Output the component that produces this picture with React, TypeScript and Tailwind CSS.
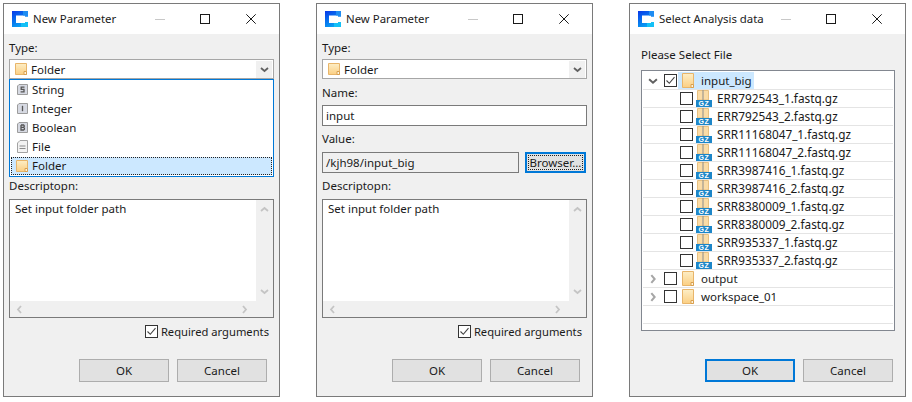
import React from 'react';

const font = "font-['Noto_Sans','Liberation_Sans',sans-serif]";

const Logo = () => (
  <svg width="16" height="16" viewBox="0 0 16 16" className="shrink-0">
    <defs>
      <linearGradient id="lg" x1="0" y1="0" x2="0.6" y2="1">
        <stop offset="0" stopColor="#0838e8" />
        <stop offset="1" stopColor="#08a8f4" />
      </linearGradient>
    </defs>
    <path d="M0 0H16V5.5H13V4.5H4V12H13V11H16V16H0Z" fill="url(#lg)" />
    <path d="M11 0H16V5.5H13V4.5H11Z" fill="#1e8cf2" />
    <path d="M9 12H13V11H16V16H9Z" fill="#14c0f6" />
  </svg>
);

const FolderIcon = ({ tall }: { tall?: boolean }) => (
  <svg width="12" height={tall ? 15 : 12} viewBox={tall ? '0 0 12 15' : '0 0 12 12'} className="shrink-0">
    <defs>
      <linearGradient id="fg" x1="0" y1="0" x2="0" y2="1">
        <stop offset="0" stopColor="#fdeec6" />
        <stop offset="1" stopColor="#fbcf83" />
      </linearGradient>
    </defs>
    <path d={tall ? 'M.5.5H11.5V14.5H.5Z' : 'M.5.5H11.5V11.5H.5Z'} fill="url(#fg)" stroke="#e8b56a" />
    <path d={tall ? 'M9 11.5H11.5V14.5H9Z' : 'M9 8.5H11.5V11.5H9Z'} fill="#fff4dc" stroke="#d9a050" />
  </svg>
);

const TypeIcon = ({ letter }: { letter: string }) => (
  <svg width="11" height="11" viewBox="0 0 11 11" className="shrink-0">
    <path d="M2 .5H10.5V10.5H.5V2Z" fill="#d6d9e2" stroke="#9c9c9c" />
    <path
      d={
        letter === 'S'
          ? 'M7.5 3.2H4.2V5.4H7V7.8H3.6'
          : letter === 'I'
            ? 'M5.5 2.8V8.2'
            : 'M4 3H6.6L7.2 3.7V4.7L6.6 5.3H4M6.6 5.3L7.4 6V7.3L6.6 8H4V3'
      }
      fill="none"
      stroke="#555"
      strokeWidth="1.3"
    />
  </svg>
);

const FileIcon = () => (
  <svg width="11" height="13" viewBox="0 0 11 13" className="shrink-0">
    <path d="M3 .5H10.5V12.5H.5V3Z" fill="#f2f2f2" stroke="#a3a3a3" />
    <path d="M2.5 6H8.5M2.5 8.5H8.5" stroke="#8a8a8a" />
  </svg>
);

const GzIcon = () => (
  <svg width="16" height="17" viewBox="0 0 16 17" className="shrink-0">
    <path d="M1.5.5H12.5V10H1.5Z" fill="#fbdca6" stroke="#e8c080" />
    <path d="M6 1H8M6 3H8M6 5H8M6 7H8M6 9H8" stroke="#8d8d8d" />
    <rect x="0" y="10" width="16" height="7" fill="#1d86c8" />
    <text x="8" y="16" textAnchor="middle" fontSize="7" fontWeight="700" letterSpacing="0.6" fill="#fff" fontFamily="Liberation Sans">
      GZ
    </text>
  </svg>
);

const Chevron = ({ dir, color = '#c4c4c4', size = 9 }: { dir: 'up' | 'down' | 'left' | 'right'; color?: string; size?: number }) => {
  const d = {
    up: 'M1 6L4.5 3L8 6',
    down: 'M1 3L4.5 6L8 3',
    left: 'M6 1L3 4.5L6 8',
    right: 'M3 1L6 4.5L3 8',
  }[dir];
  return (
    <svg width={size} height={size} viewBox="0 0 9 9" className="shrink-0">
      <path d={d} fill="none" stroke={color} strokeWidth="1.8" />
    </svg>
  );
};

const Window = ({ title, children }: { title: string; children: React.ReactNode }) => (
  <div className="w-[277px] h-[394px] border border-[#7a7a7a] bg-[#f0f0f0] flex flex-col shrink-0">
    <div className="h-[30px] bg-white flex items-center pl-[8px] shrink-0">
      <Logo />
      <span className="ml-[5px] w-[122px] text-[11.4px] text-[#1a1a1a] truncate">{title}</span>
      <div className="w-[10px] h-px bg-[#c8c8c8] mt-px" />
      <div className="w-[10px] h-[10px] border border-[#1a1a1a] ml-[35px]" />
      <svg width="10" height="10" viewBox="0 0 10 10" className="ml-[36px]">
        <path d="M.3.3L9.7 9.7M9.7.3L.3 9.7" stroke="#1a1a1a" />
      </svg>
    </div>
    {children}
  </div>
);

const Check = ({ checked, className }: { checked?: boolean; className: string }) => (
  <div className={`w-[13px] h-[13px] border border-[#333] bg-white flex items-center justify-center shrink-0 ${className}`}>
    {checked && (
      <svg width="11" height="11" viewBox="0 0 11 11">
        <path d="M1.5 5.5L4.3 8.3L9.5 2.2" fill="none" stroke="#444" strokeWidth="1.1" />
      </svg>
    )}
  </div>
);

const TypeSelect = () => (
  <div className="h-[20px] mx-[5px] border border-[#a6a6a6] bg-white flex items-center pl-[5px] pr-[1px] shrink-0">
    <FolderIcon />
    <span className="ml-[4px] flex-1 pt-[2px]">Folder</span>
    <div className="w-[16px] h-[17px] bg-[#f0f0f0] flex items-center justify-center">
      <Chevron dir="down" color="#606060" />
    </div>
  </div>
);

const Description = () => (
  <>
    <div className="h-[16px] mx-[5px] leading-[16px] mt-[1px] shrink-0">Descriptopn:</div>
    <div className="h-[119px] mx-[5px] mt-[5px] border border-[#7a7a7a] bg-white flex flex-col shrink-0">
      <div className="flex-1 flex min-h-0">
        <div className="flex-1 pl-[5px] leading-[18px]">Set input folder path</div>
        <div className="w-[17px] bg-[#f0f0f0] flex flex-col items-center justify-between py-[5px]">
          <Chevron dir="up" />
          <Chevron dir="down" />
        </div>
      </div>
      <div className="h-[16px] bg-[#f0f0f0] flex items-center justify-between px-[5px] pr-[24px] shrink-0">
        <Chevron dir="left" />
        <Chevron dir="right" />
      </div>
    </div>
    <div className="h-[13px] mt-[7px] pr-[10px] flex items-center justify-end shrink-0">
      <Check checked className="mr-[3px]" />
      <span className="text-[11.2px] leading-[11px]">Required arguments</span>
    </div>
  </>
);

const Btn = ({ label, focus, className = '' }: { label: string; focus?: boolean; className?: string }) => (
  <div
    className={`w-[90px] h-[23px] bg-[#e1e1e1] flex items-center justify-center ${focus ? 'border-2 border-[#0078d7]' : 'border border-[#adadad]'} ${className}`}
  >
    {label}
  </div>
);

const Footer = ({ focus, className = 'mt-[21px]' }: { focus?: boolean; className?: string }) => (
  <div className={`flex justify-end gap-[8px] pr-[12px] shrink-0 ${className}`}>
    <Btn label="OK" focus={focus} />
    <Btn label="Cancel" />
  </div>
);

const Label = ({ children, className = '' }: { children: React.ReactNode; className?: string }) => (
  <div className={`h-[16px] leading-[16px] pt-px mx-[5px] shrink-0 ${className}`}>{children}</div>
);

const typeRows = [
  { name: 'String', icon: <TypeIcon letter="S" /> },
  { name: 'Integer', icon: <TypeIcon letter="I" /> },
  { name: 'Boolean', icon: <TypeIcon letter="B" /> },
  { name: 'File', icon: <FileIcon /> },
];

const files = [
  'ERR792543_1.fastq.gz',
  'ERR792543_2.fastq.gz',
  'SRR11168047_1.fastq.gz',
  'SRR11168047_2.fastq.gz',
  'SRR3987416_1.fastq.gz',
  'SRR3987416_2.fastq.gz',
  'SRR8380009_1.fastq.gz',
  'SRR8380009_2.fastq.gz',
  'SRR935337_1.fastq.gz',
  'SRR935337_2.fastq.gz',
];

const TreeRow = ({ children }: { children?: React.ReactNode }) => (
  <div className="h-[18px] mx-[1px] border-b border-[#e4e4e4] flex items-center shrink-0">{children}</div>
);

const App = () => (
  <div className={`w-[912px] h-[402px] bg-white overflow-hidden flex gap-[36px] pl-[3px] pt-[3px] text-[11.5px] text-[#1a1a1a] ${font}`}>
    <Window title="New Parameter">
      <Label className="mt-[5px]">Type:</Label>
      <div className="mt-[4px]">
        <TypeSelect />
      </div>
      <div className="h-[98px] mx-[5px] border border-[#0078d7] bg-white flex flex-col shrink-0">
        {typeRows.map((r) => (
          <div key={r.name} className="h-[19px] flex items-center pl-[6px] shrink-0">
            <div className="w-[12px] flex justify-center">{r.icon}</div>
            <span className="ml-[4px]">{r.name}</span>
          </div>
        ))}
        <div className="h-[18px] mx-px mt-px bg-[#cce8ff] border border-dotted border-[#222] flex items-center pl-[4px] shrink-0">
          <FolderIcon />
          <span className="ml-[4px]">Folder</span>
        </div>
      </div>
      <Description />
      <Footer />
    </Window>

    <Window title="New Parameter">
      <Label className="mt-[5px]">Type:</Label>
      <div className="mt-[4px]">
        <TypeSelect />
      </div>
      <Label className="mt-[5px]">Name:</Label>
      <div className="h-[21px] mx-[5px] mt-[5px] border border-[#7a7a7a] bg-white pl-[3px] leading-[19px] shrink-0">input</div>
      <Label className="mt-[4px]">Value:</Label>
      <div className="flex mx-[5px] mt-[6px] shrink-0">
        <div className="w-[197px] h-[21px] border border-[#7a7a7a] pl-[3px] leading-[19px]">/kjh98/input_big</div>
        <div className="ml-[6px] w-[61px] h-[21px] border-2 border-[#0078d7] bg-[#e1e1e1] p-px">
          <div className="h-full border border-dotted border-[#222] flex items-center justify-center leading-none">Browser...</div>
        </div>
      </div>
      <div className="mt-[4px] flex flex-col">
        <Description />
      </div>
      <Footer />
    </Window>

    <Window title="Select Analysis data">
      <div className="h-[16px] leading-[16px] pt-px ml-[11px] mt-[12px] shrink-0">Please Select File</div>
      <div className="h-[261px] w-[254px] ml-[11px] mt-[8px] border border-[#828790] bg-white overflow-hidden pt-[1px] flex flex-col shrink-0">
        <TreeRow>
          <div className="w-[5px]" />
          <Chevron dir="down" color="#606060" size={10} />
          <Check checked className="ml-[6px]" />
          <div className="ml-px w-[76px] h-[17px] bg-[#cce8ff] flex items-center pl-[4px]">
            <FolderIcon tall />
            <span className="ml-[7px] pt-px">input_big</span>
          </div>
        </TreeRow>
        {files.map((f) => (
          <TreeRow key={f}>
            <Check className="ml-[37px]" />
            <div className="ml-[3px]">
              <GzIcon />
            </div>
            <span className="ml-[5px] text-[11.8px]">{f}</span>
          </TreeRow>
        ))}
        {['output', 'workspace_01'].map((f) => (
          <TreeRow key={f}>
            <div className="w-[5px]" />
            <Chevron dir="right" color="#a6a6a6" size={10} />
            <Check className="ml-[6px]" />
            <div className="ml-[5px]">
              <FolderIcon tall />
            </div>
            <span className="ml-[7px]">{f}</span>
          </TreeRow>
        ))}
        <TreeRow />
      </div>
      <Footer focus className="mt-[28px]" />
    </Window>
  </div>
);

export default App;
